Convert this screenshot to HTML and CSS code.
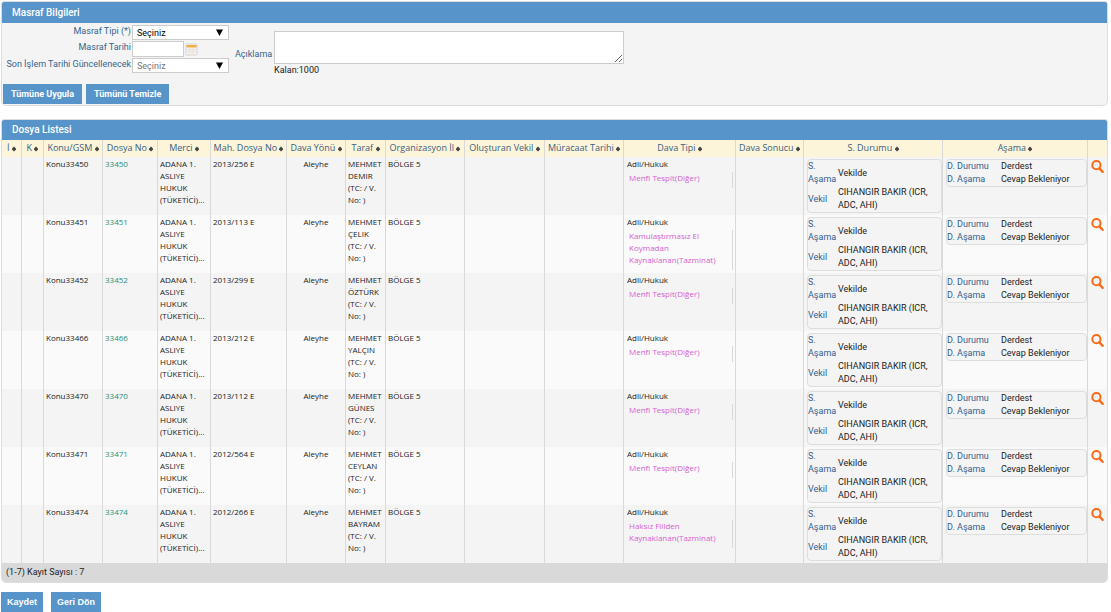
FILE: index.html
```
<!DOCTYPE html>
<html lang="tr">
<head>
<meta charset="utf-8">
<title>Masraf Bilgileri</title>
<link rel="stylesheet" href="styles.css">
</head>
<body>
<svg class="defs" aria-hidden="true">
  <symbol id="mag" viewBox="0 0 13 13"><circle cx="5.4" cy="5.2" r="4.1" fill="none" stroke="currentColor" stroke-width="2"/><path d="M8.4 8.4L11.6 11.8" stroke="currentColor" stroke-width="2.4" stroke-linecap="round"/></symbol>
  <symbol id="down" viewBox="0 0 7 7"><path d="M0 0.5h7L3.5 7z" fill="#000"/></symbol>
  <symbol id="sort" viewBox="0 0 4 6"><path d="M2 0.4L4 2.4V3.6L2 5.6L0 3.6V2.4z" fill="#444"/></symbol>
</svg>
<main>
<section class="panel">
  <h2 class="title title-form">Masraf Bilgileri</h2>
  <form class="form">
    <div class="fields">
      <div class="grid">
        <label for="tip">Masraf Tipi (*)</label>
        <span class="select"><select id="tip"><option>Seçiniz</option></select><svg class="arrow"><use href="#down"/></svg></span>
        <label for="tarih">Masraf Tarihi</label>
        <span class="date"><input id="tarih" type="text"><button class="cal" type="button" aria-label="Takvim"><svg viewBox="0 0 13 13"><rect x=".5" y=".5" width="12" height="12" rx="2" fill="#e9e7e3" stroke="#e2e2e2"/><rect x="2" y="4" width="9" height="7" fill="#f6f3ec"/><path d="M2 6.5h9M2 8.5h9M5 5v6M8 5v6" stroke="#e3ded4" stroke-width=".7"/><rect x="1.5" y="2" width="10" height="2.4" fill="#efad3c"/></svg></button></span>
        <label for="son">Son İşlem Tarihi Güncellenecek</label>
        <span class="select muted"><select id="son"><option>Seçiniz</option></select><svg class="arrow"><use href="#down"/></svg></span>
      </div>
      <div class="note">
        <label for="aciklama">Açıklama</label>
        <textarea id="aciklama"></textarea>
        <span class="left">Kalan:1000</span>
      </div>
    </div>
    <div class="actions">
      <button class="btn" type="button">Tümüne Uygula</button>
      <button class="btn" type="button">Tümünü Temizle</button>
    </div>
  </form>
</section>

<section class="panel list">
  <h2 class="title">Dosya Listesi</h2>
  <table class="files">
    <colgroup><col class="c-i"><col class="c-k"><col class="c-konu"><col class="c-dosya"><col class="c-merci"><col class="c-mah"><col class="c-yon"><col class="c-taraf"><col class="c-org"><col class="c-vekil"><col class="c-mur"><col class="c-tip"><col class="c-sonuc"><col class="c-durum"><col class="c-asama"><col class="c-ara"></colgroup>
    <thead><tr>
      <th>İ <svg><use href="#sort"/></svg></th><th>K <svg><use href="#sort"/></svg></th><th>Konu/GSM <svg><use href="#sort"/></svg></th><th>Dosya No <svg><use href="#sort"/></svg></th><th>Merci <svg><use href="#sort"/></svg></th><th>Mah. Dosya No <svg><use href="#sort"/></svg></th><th>Dava Yönü <svg><use href="#sort"/></svg></th><th>Taraf <svg><use href="#sort"/></svg></th><th>Organizasyon İl <svg><use href="#sort"/></svg></th><th>Oluşturan Vekil <svg><use href="#sort"/></svg></th><th>Müracaat Tarihi <svg><use href="#sort"/></svg></th><th>Dava Tipi <svg><use href="#sort"/></svg></th><th>Dava Sonucu <svg><use href="#sort"/></svg></th><th>S. Durumu <svg><use href="#sort"/></svg></th><th>Aşama <svg><use href="#sort"/></svg></th><th></th>
    </tr></thead>
    <tbody>
    <tr><td></td><td></td><td>Konu33450</td><td><a href="#">33450</a></td><td>ADANA 1.<br>ASLIYE<br>HUKUK<br>(TÜKETİCİ)...</td><td>2013/256 E</td><td class="mid">Aleyhe</td><td>MEHMET<br>DEMIR<br>(TC: / V.<br>No: )</td><td>BÖLGE 5</td><td></td><td></td>
      <td class="type">Adli/Hukuk<div class="kind">Menfi Tespit(Diğer)</div></td><td></td>
      <td class="boxed"><dl class="box status"><dt>S.<br>Aşama</dt><dd>Vekilde</dd><dt>Vekil</dt><dd>CIHANGIR BAKIR (ICR,<br>ADC, AHI)</dd></dl></td>
      <td class="boxed"><dl class="box stage"><dt>D. Durumu</dt><dd>Derdest</dd><dt>D. Aşama</dt><dd>Cevap Bekleniyor</dd></dl></td>
      <td class="find"><button type="button" aria-label="Ara"><svg><use href="#mag"/></svg></button></td></tr>
    <tr><td></td><td></td><td>Konu33451</td><td><a href="#">33451</a></td><td>ADANA 1.<br>ASLIYE<br>HUKUK<br>(TÜKETİCİ)...</td><td>2013/113 E</td><td class="mid">Aleyhe</td><td>MEHMET<br>ÇELIK<br>(TC: / V.<br>No: )</td><td>BÖLGE 5</td><td></td><td></td>
      <td class="type">Adli/Hukuk<div class="kind">Kamulaştırmasız El<br>Koymadan<br>Kaynaklanan(Tazminat)</div></td><td></td>
      <td class="boxed"><dl class="box status"><dt>S.<br>Aşama</dt><dd>Vekilde</dd><dt>Vekil</dt><dd>CIHANGIR BAKIR (ICR,<br>ADC, AHI)</dd></dl></td>
      <td class="boxed"><dl class="box stage"><dt>D. Durumu</dt><dd>Derdest</dd><dt>D. Aşama</dt><dd>Cevap Bekleniyor</dd></dl></td>
      <td class="find"><button type="button" aria-label="Ara"><svg><use href="#mag"/></svg></button></td></tr>
    <tr><td></td><td></td><td>Konu33452</td><td><a href="#">33452</a></td><td>ADANA 1.<br>ASLIYE<br>HUKUK<br>(TÜKETİCİ)...</td><td>2013/299 E</td><td class="mid">Aleyhe</td><td>MEHMET<br>ÖZTÜRK<br>(TC: / V.<br>No: )</td><td>BÖLGE 5</td><td></td><td></td>
      <td class="type">Adli/Hukuk<div class="kind">Menfi Tespit(Diğer)</div></td><td></td>
      <td class="boxed"><dl class="box status"><dt>S.<br>Aşama</dt><dd>Vekilde</dd><dt>Vekil</dt><dd>CIHANGIR BAKIR (ICR,<br>ADC, AHI)</dd></dl></td>
      <td class="boxed"><dl class="box stage"><dt>D. Durumu</dt><dd>Derdest</dd><dt>D. Aşama</dt><dd>Cevap Bekleniyor</dd></dl></td>
      <td class="find"><button type="button" aria-label="Ara"><svg><use href="#mag"/></svg></button></td></tr>
    <tr><td></td><td></td><td>Konu33466</td><td><a href="#">33466</a></td><td>ADANA 1.<br>ASLIYE<br>HUKUK<br>(TÜKETİCİ)...</td><td>2013/212 E</td><td class="mid">Aleyhe</td><td>MEHMET<br>YALÇIN<br>(TC: / V.<br>No: )</td><td>BÖLGE 5</td><td></td><td></td>
      <td class="type">Adli/Hukuk<div class="kind">Menfi Tespit(Diğer)</div></td><td></td>
      <td class="boxed"><dl class="box status"><dt>S.<br>Aşama</dt><dd>Vekilde</dd><dt>Vekil</dt><dd>CIHANGIR BAKIR (ICR,<br>ADC, AHI)</dd></dl></td>
      <td class="boxed"><dl class="box stage"><dt>D. Durumu</dt><dd>Derdest</dd><dt>D. Aşama</dt><dd>Cevap Bekleniyor</dd></dl></td>
      <td class="find"><button type="button" aria-label="Ara"><svg><use href="#mag"/></svg></button></td></tr>
    <tr><td></td><td></td><td>Konu33470</td><td><a href="#">33470</a></td><td>ADANA 1.<br>ASLIYE<br>HUKUK<br>(TÜKETİCİ)...</td><td>2013/112 E</td><td class="mid">Aleyhe</td><td>MEHMET<br>GÜNES<br>(TC: / V.<br>No: )</td><td>BÖLGE 5</td><td></td><td></td>
      <td class="type">Adli/Hukuk<div class="kind">Menfi Tespit(Diğer)</div></td><td></td>
      <td class="boxed"><dl class="box status"><dt>S.<br>Aşama</dt><dd>Vekilde</dd><dt>Vekil</dt><dd>CIHANGIR BAKIR (ICR,<br>ADC, AHI)</dd></dl></td>
      <td class="boxed"><dl class="box stage"><dt>D. Durumu</dt><dd>Derdest</dd><dt>D. Aşama</dt><dd>Cevap Bekleniyor</dd></dl></td>
      <td class="find"><button type="button" aria-label="Ara"><svg><use href="#mag"/></svg></button></td></tr>
    <tr><td></td><td></td><td>Konu33471</td><td><a href="#">33471</a></td><td>ADANA 1.<br>ASLIYE<br>HUKUK<br>(TÜKETİCİ)...</td><td>2012/564 E</td><td class="mid">Aleyhe</td><td>MEHMET<br>CEYLAN<br>(TC: / V.<br>No: )</td><td>BÖLGE 5</td><td></td><td></td>
      <td class="type">Adli/Hukuk<div class="kind">Menfi Tespit(Diğer)</div></td><td></td>
      <td class="boxed"><dl class="box status"><dt>S.<br>Aşama</dt><dd>Vekilde</dd><dt>Vekil</dt><dd>CIHANGIR BAKIR (ICR,<br>ADC, AHI)</dd></dl></td>
      <td class="boxed"><dl class="box stage"><dt>D. Durumu</dt><dd>Derdest</dd><dt>D. Aşama</dt><dd>Cevap Bekleniyor</dd></dl></td>
      <td class="find"><button type="button" aria-label="Ara"><svg><use href="#mag"/></svg></button></td></tr>
    <tr><td></td><td></td><td>Konu33474</td><td><a href="#">33474</a></td><td>ADANA 1.<br>ASLIYE<br>HUKUK<br>(TÜKETİCİ)...</td><td>2012/266 E</td><td class="mid">Aleyhe</td><td>MEHMET<br>BAYRAM<br>(TC: / V.<br>No: )</td><td>BÖLGE 5</td><td></td><td></td>
      <td class="type">Adli/Hukuk<div class="kind">Haksız Fiilden<br>Kaynaklanan(Tazminat)</div></td><td></td>
      <td class="boxed"><dl class="box status"><dt>S.<br>Aşama</dt><dd>Vekilde</dd><dt>Vekil</dt><dd>CIHANGIR BAKIR (ICR,<br>ADC, AHI)</dd></dl></td>
      <td class="boxed"><dl class="box stage"><dt>D. Durumu</dt><dd>Derdest</dd><dt>D. Aşama</dt><dd>Cevap Bekleniyor</dd></dl></td>
      <td class="find"><button type="button" aria-label="Ara"><svg><use href="#mag"/></svg></button></td></tr>
    </tbody>
  </table>
  <p class="count">(1-7) Kayıt Sayısı : 7</p>
</section>
</main>
<footer class="bottom">
  <button class="btn plain" type="button">Kaydet</button>
  <button class="btn plain" type="button">Geri Dön</button>
</footer>
</body>
</html>
```
FILE: styles.css
```
* { box-sizing: border-box; }
body { margin: 0; background: #fff; color: #222; font: 9px/12px "Open Sans", "Noto Sans", sans-serif; }
button, input, select, textarea { font: inherit; color: inherit; margin: 0; padding: 0; border: 0; border-radius: 0; }
.defs { display: none; }
main { padding: 1px 3px 0 1px; }

.panel { border: 1px solid #ddd; border-radius: 3px 3px 5px 5px; background: #f4f4f4; overflow: hidden; }
.list { margin-top: 13px; }
.title { margin: 0; padding: 0 10px; background: #5694ca; color: #fff; font: 500 10px/20px Roboto, sans-serif; }
.title-form { line-height: 21px; }

.form { padding: 2px 1px 1px; font-family: Roboto, sans-serif; }
.form label { color: #35648f; }
.fields { display: flex; align-items: flex-start; gap: 6px; }
.grid { display: grid; grid-template-columns: 128px 97px; column-gap: 1px; row-gap: 1px; }
.grid label { text-align: right; white-space: nowrap; line-height: 13px; }
.select { display: grid; align-items: center; color: #000; }
.select > * { grid-area: 1 / 1; }
.select select { appearance: none; width: 100%; height: 15px; padding: 0 4px; border: 1px solid #ccc; background: #fff; }
.select.muted select { color: #777; }
.arrow { width: 7px; height: 7px; justify-self: end; margin-right: 6px; pointer-events: none; }
.date { display: flex; align-items: center; gap: 1px; }
.date input { width: 52px; height: 16px; border: 1px solid #ccc; background: #fff; }
.cal { width: 13px; height: 13px; background: none; }
.cal svg { display: block; width: 13px; height: 13px; }
.note { display: grid; grid-template-columns: 37px 350px; column-gap: 2px; padding-top: 6px; }
.note label { grid-row: 1 / 3; align-self: center; }
.note textarea { height: 33px; border: 1px solid #ccc; background: #fff; resize: both; }
.left { grid-column: 2; }
.actions { display: flex; gap: 4px; padding-top: 8px; }
.btn { height: 20px; padding: 0 8px; background: #5694ca; color: #fff; font-size: 9px; font-weight: 700; }
.plain { padding: 0 6px; font-family: "Liberation Sans", Arial, sans-serif; }

.files { width: 100%; table-layout: fixed; border-collapse: separate; border-spacing: 0; font-size: 8px; }
.c-i { width: 20px; } .c-k { width: 22px; } .c-konu { width: 59px; } .c-dosya { width: 55px; }
.c-merci { width: 53px; } .c-mah { width: 76px; } .c-yon { width: 59px; } .c-taraf { width: 40px; }
.c-org { width: 79px; } .c-vekil { width: 80px; } .c-mur { width: 79px; } .c-tip { width: 112px; }
.c-sonuc { width: 68px; } .c-durum { width: 139px; } .c-asama { width: 145px; } .c-ara { width: 19px; }
.files th { height: 17px; padding: 0 0 2px; background: #fcf5da; color: #3b6080; font-size: 9px; font-weight: 400; white-space: nowrap; text-align: center; }
.files th svg { width: 4px; height: 6px; vertical-align: -1px; }
.files th, .files td { border-right: 1px solid #d9d9d9; }
.files th:last-child, .files td:last-child { border-right: 0; }
.files td { height: 58px; padding: 1px 2px; vertical-align: top; white-space: nowrap; }
.files tbody tr:nth-child(even) { background: #fafafa; }
.files a { color: #23917a; text-decoration: none; }
.files .mid { text-align: center; }
.files .type { padding-left: 3px; }
.kind { margin-top: 2px; padding: 0 2px 4px; border-right: 1px solid #d9d9d9; color: #d661cf; }
.files .boxed { padding: 2px 0 0 3px; }
.box { display: grid; margin: 0; border: 1px solid #ddd; border-radius: 4px; background: #f4f4f4; font: 9px/13px Roboto, sans-serif; align-items: center; }
.box dt { color: #35608f; }
.box dd { margin: 0; }
.status { grid-template-columns: 30px 1fr; }
.stage { grid-template-columns: 54px 1fr; }
.files .find { padding: 3px 0 0 3px; }
.find button { display: block; background: none; color: #f96b16; }
.find svg { display: block; width: 13px; height: 13px; }
.count { margin: 0; padding: 0 4px; background: #d9d9d9; font-family: Roboto, sans-serif; line-height: 19px; }

.bottom { display: flex; gap: 8px; padding: 9px 1px 0; }
```
